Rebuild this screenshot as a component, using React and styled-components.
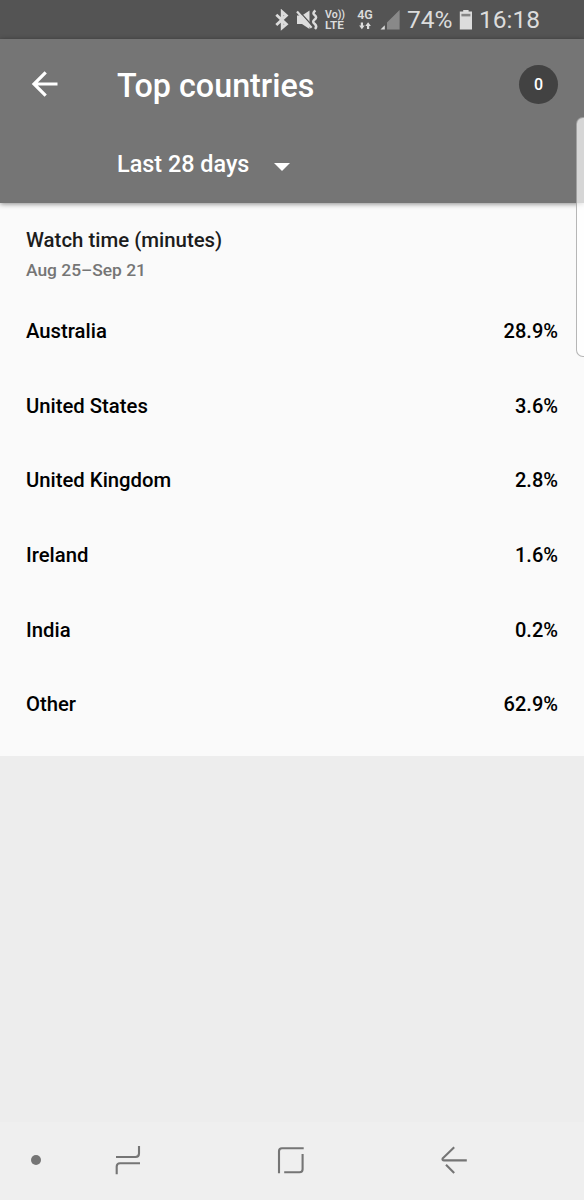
import React from "react";
import styled, { createGlobalStyle } from "styled-components";

const countries = [
  { name: "Australia", share: "28.9%" },
  { name: "United States", share: "3.6%" },
  { name: "United Kingdom", share: "2.8%" },
  { name: "Ireland", share: "1.6%" },
  { name: "India", share: "0.2%" },
  { name: "Other", share: "62.9%" },
];

const StatusIcons = () => (
  <>
    <StatusSvg width="14" height="22" viewBox="0 0 14 22" ml="275px">
      <path
        d="M1.3 5.8 L11.4 15.2 L7.2 18.8 V2.8 L11.4 6.6 L1.3 16"
        fill="none"
        stroke="#dcdcdc"
        strokeWidth="2.8"
      />
    </StatusSvg>
    <StatusSvg width="22" height="22" viewBox="0 0 22 22" ml="7px">
      <path d="M1 6.5 H6 L13.5 1.5 V20 L6 15 H1 Z" fill="#dcdcdc" />
      <path d="M2.4 1.4 L16.5 17" stroke="#545454" strokeWidth="1.4" />
      <path d="M1 2.4 L15.6 18.8" stroke="#dcdcdc" strokeWidth="2.2" />
      <path
        d="M19.4 1.5 Q15.8 4.2 18.8 6.3 Q21.6 8.4 18.4 10.8 Q15.8 12.8 18.8 15 Q21.4 17.4 19 20"
        fill="none"
        stroke="#dcdcdc"
        strokeWidth="2.5"
      />
    </StatusSvg>
  </>
);

const SignalIcon = () => (
  <StatusSvg width="20" height="22" viewBox="0 0 20 22" ml="7px">
    <path d="M0.5 20.5 L4.8 16.2 V20.5 Z" fill="#dcdcdc" />
    <path d="M7 20.5 V13.5 L19.6 1 V20.5 Z" fill="#898989" />
  </StatusSvg>
);

const BatteryIcon = () => (
  <StatusSvg width="14" height="22" viewBox="0 0 14 22" ml="6px">
    <path d="M4.2 1 H9.6 V2.6 H13 V20.6 H0.8 V2.6 H4.2 Z" fill="#dcdcdc" />
    <path d="M2.4 4.8 H11.4 V7.4 H2.4 Z" fill="#858585" />
  </StatusSvg>
);

const App = () => {
  return (
    <Screen>
      <GlobalStyle />
      <StatusBar>
        <StatusIcons />
        <Volte>
          <VolteLine size="10.6px">Vo))</VolteLine>
          <VolteLine size="11.8px">LTE</VolteLine>
        </Volte>
        <Network>
          <span>4G</span>
          <svg width="12" height="8" viewBox="0 0 12 8">
            <path d="M1.8 0.5 H4 V3.4 H5.7 L2.9 7.2 L0.1 3.4 H1.8 Z" fill="#dcdcdc" />
            <path d="M8 7 H10.2 V4 H11.9 L9.1 0.2 L6.3 4 H8 Z" fill="#dcdcdc" />
          </svg>
        </Network>
        <SignalIcon />
        <StatusText width="46px" ml="7px">
          74%
        </StatusText>
        <BatteryIcon />
        <StatusText ml="6px">16:18</StatusText>
      </StatusBar>

      <Header>
        <TitleRow>
          <BackBtn aria-label="Back">
            <svg width="30" height="30" viewBox="0 0 30 30">
              <path
                d="M27.5 14 H4 M15.7 2.3 L4 14 L15.7 25.7"
                fill="none"
                stroke="#fff"
                strokeWidth="3.2"
              />
            </svg>
          </BackBtn>
          <Title>Top countries</Title>
          <Badge>0</Badge>
        </TitleRow>
        <PeriodRow>
          <Period>Last 28 days</Period>
          <svg width="16" height="8" viewBox="0 0 16 8">
            <path d="M0 0 H16 L8 8 Z" fill="#fff" />
          </svg>
        </PeriodRow>
      </Header>

      <Panel>
        <Metric>Watch time (minutes)</Metric>
        <DateRange>Aug 25–Sep 21</DateRange>
        <List>
          {countries.map((country) => (
            <Row key={country.name}>
              <CountryName>{country.name}</CountryName>
              <span>{country.share}</span>
            </Row>
          ))}
        </List>
      </Panel>

      <Blank />

      <NavBar>
        <Dot />
        <NavBtn ml="73px" aria-label="Recent apps">
          <svg width="28" height="30" viewBox="0 0 28 30">
            <path d="M2 12 H21.5 Q25 12 25 8.5 V1 M26 18.3 H6 Q2.7 18.3 2.7 21.6 V29.3" />
          </svg>
        </NavBtn>
        <NavBtn ml="135px" aria-label="Home">
          <svg width="28" height="30" viewBox="0 0 28 30">
            <path d="M2 28.2 V6.2 Q2 3.2 5 3.2 H26.7 M25.6 9 V24.2 Q25.6 27.2 22.6 27.2 H7.2" />
          </svg>
        </NavBtn>
        <NavBtn ml="135px" aria-label="Back">
          <svg width="28" height="30" viewBox="0 0 28 30">
            <path
              strokeLinejoin="round"
              d="M14.2 2.2 L2.6 13.6 Q2 15.4 4 15.4 H26.8 M6 19.7 L14.2 28"
            />
          </svg>
        </NavBtn>
      </NavBar>
      <EdgeHandle />
    </Screen>
  );
};

export default App;

const GlobalStyle = createGlobalStyle`
  * {
    box-sizing: border-box;
  }
  body {
    margin: 0;
    font-family: Roboto, sans-serif;
  }
`;

const Screen = styled.div`
  position: relative;
  display: flex;
  flex-direction: column;
  width: 584px;
  height: 1200px;
  overflow: hidden;
  background: #ededed;
`;

const StatusBar = styled.div`
  display: flex;
  align-items: center;
  height: 39px;
  flex-shrink: 0;
  color: #dcdcdc;
  background: #545454;
`;

const StatusSvg = styled.svg`
  flex-shrink: 0;
  margin-left: ${(props) => props.ml};
`;

const StatusText = styled.span`
  width: ${(props) => props.width};
  margin-left: ${(props) => props.ml};
  padding-top: 1px;
  font-size: 24.5px;
  line-height: 30px;
  white-space: nowrap;
`;

const Volte = styled.div`
  display: flex;
  flex-direction: column;
  width: 21px;
  margin-left: 7px;
  padding-top: 1px;
`;

const VolteLine = styled.span`
  font-size: ${(props) => props.size};
  font-weight: 600;
  line-height: 11px;
  white-space: nowrap;
`;

const Network = styled.div`
  display: flex;
  flex-direction: column;
  align-items: center;
  width: 16px;
  margin-left: 11px;
  font-size: 12.5px;
  font-weight: 600;
  line-height: 12px;
  gap: 1px;
`;

const Header = styled.header`
  height: 164px;
  flex-shrink: 0;
  color: #fff;
  background: #757575;
  box-shadow: 0 1px 5px rgba(0, 0, 0, 0.45);
  z-index: 1;
`;

const TitleRow = styled.div`
  display: flex;
  align-items: center;
  height: 92px;
  padding: 0 26px 0 29.5px;
`;

const BackBtn = styled.button`
  display: flex;
  margin: 0;
  padding: 0;
  border: none;
  background: transparent;
`;

const Title = styled.h1`
  flex: 1;
  margin: 0 0 0 57.5px;
  padding-top: 2px;
  font-size: 32.3px;
  font-weight: 500;
  line-height: 40px;
`;

const Badge = styled.div`
  width: 39px;
  height: 39px;
  margin-bottom: 2px;
  border-radius: 50%;
  background: #424242;
  font-size: 16px;
  font-weight: 500;
  line-height: 40px;
  text-align: center;
`;

const PeriodRow = styled.div`
  display: flex;
  align-items: center;
  height: 65px;
  padding-left: 117px;

  svg {
    margin: 6px 0 0 25px;
  }
`;

const Period = styled.span`
  font-size: 23.4px;
  font-weight: 500;
`;

const Panel = styled.main`
  height: 553px;
  flex-shrink: 0;
  padding: 22px 26px 0;
  background: #fafafa;
`;

const Metric = styled.h2`
  margin: 0;
  font-size: 20.4px;
  font-weight: 500;
  line-height: 30px;
  color: #1c1c1c;
`;

const DateRange = styled.p`
  margin: 0;
  font-size: 17.4px;
  font-weight: 500;
  line-height: 30px;
  color: #757575;
`;

const List = styled.div`
  padding-top: 9px;
`;

const Row = styled.div`
  display: flex;
  align-items: center;
  justify-content: space-between;
  height: 74.6px;
  font-size: 20px;
  font-weight: 500;
  color: #000;
`;

const CountryName = styled.span`
  font-size: 20.3px;
`;

const Blank = styled.div`
  flex: 1;
`;

const NavBar = styled.nav`
  display: flex;
  align-items: center;
  height: 78px;
  flex-shrink: 0;
  padding: 0 0 2px 31px;
  background: #efefef;
`;

const Dot = styled.span`
  width: 10px;
  height: 10px;
  border-radius: 50%;
  background: #757575;
`;

const NavBtn = styled.button`
  display: flex;
  margin: 0 0 0 ${(props) => props.ml};
  padding: 0;
  border: none;
  background: transparent;

  path {
    fill: none;
    stroke: #757575;
    stroke-width: 2.1;
  }
`;

/* edge panel handle, sits over the right border of the screen */
const EdgeHandle = styled.div`
  position: absolute;
  top: 117px;
  right: -2px;
  width: 10px;
  height: 240px;
  z-index: 2;
  border: 1px solid rgba(110, 110, 110, 0.5);
  border-radius: 7px 0 0 7px;
  background: rgba(255, 255, 255, 0.7);
`;
